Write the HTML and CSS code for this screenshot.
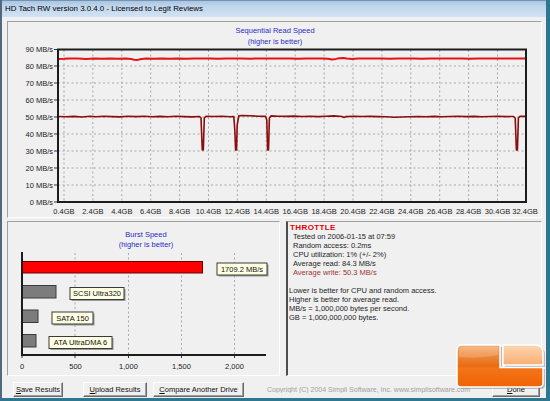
FILE: index.html
```html
<!DOCTYPE html>
<html lang="en">
<head>
  <meta charset="UTF-8">
  <title>HD Tach RW version 3.0.4.0</title>
  <link rel="stylesheet" href="styles.css">
</head>
<body>
  <div class="window">
    <div class="titlebar">HD Tach RW version 3.0.4.0 - Licensed to Legit Reviews</div>
    <div class="client">
      <div class="panel panel-top">
        <svg class="chart" width="533" height="195" viewBox="8 22 533 195">
          <text class="chart-title" x="275" y="33">Sequential Read Speed</text>
          <text class="chart-title" x="275" y="44">(higher is better)</text>

          <g class="grid">
            <line x1="58" y1="66" x2="526" y2="66"/>
            <line x1="58" y1="83" x2="526" y2="83"/>
            <line x1="58" y1="100" x2="526" y2="100"/>
            <line x1="58" y1="117" x2="526" y2="117"/>
            <line x1="58" y1="134" x2="526" y2="134"/>
            <line x1="58" y1="151" x2="526" y2="151"/>
            <line x1="58" y1="168" x2="526" y2="168"/>
            <line x1="58" y1="185" x2="526" y2="185"/>
            <line x1="64" y1="50" x2="64" y2="202"/>
            <line x1="92.9" y1="50" x2="92.9" y2="202"/>
            <line x1="121.8" y1="50" x2="121.8" y2="202"/>
            <line x1="150.7" y1="50" x2="150.7" y2="202"/>
            <line x1="179.6" y1="50" x2="179.6" y2="202"/>
            <line x1="208.5" y1="50" x2="208.5" y2="202"/>
            <line x1="237.4" y1="50" x2="237.4" y2="202"/>
            <line x1="266.3" y1="50" x2="266.3" y2="202"/>
            <line x1="295.2" y1="50" x2="295.2" y2="202"/>
            <line x1="324.1" y1="50" x2="324.1" y2="202"/>
            <line x1="353" y1="50" x2="353" y2="202"/>
            <line x1="381.9" y1="50" x2="381.9" y2="202"/>
            <line x1="410.8" y1="50" x2="410.8" y2="202"/>
            <line x1="439.7" y1="50" x2="439.7" y2="202"/>
            <line x1="468.6" y1="50" x2="468.6" y2="202"/>
            <line x1="497.5" y1="50" x2="497.5" y2="202"/>
          </g>

          <g class="ticks">
            <line x1="54" y1="49.5" x2="58" y2="49.5"/>
            <line x1="54" y1="66" x2="58" y2="66"/>
            <line x1="54" y1="83" x2="58" y2="83"/>
            <line x1="54" y1="100" x2="58" y2="100"/>
            <line x1="54" y1="117" x2="58" y2="117"/>
            <line x1="54" y1="134" x2="58" y2="134"/>
            <line x1="54" y1="151" x2="58" y2="151"/>
            <line x1="54" y1="168" x2="58" y2="168"/>
            <line x1="54" y1="185" x2="58" y2="185"/>
            <line x1="54" y1="202" x2="58" y2="202"/>
          </g>

          <g class="axis-y">
            <text x="53" y="52.2">90 MB/s</text>
            <text x="53" y="68.7">80 MB/s</text>
            <text x="53" y="85.7">70 MB/s</text>
            <text x="53" y="102.7">60 MB/s</text>
            <text x="53" y="119.7">50 MB/s</text>
            <text x="53" y="136.7">40 MB/s</text>
            <text x="53" y="153.7">30 MB/s</text>
            <text x="53" y="170.7">20 MB/s</text>
            <text x="53" y="187.7">10 MB/s</text>
            <text x="53" y="204.7">0 MB/s</text>
          </g>

          <g class="axis-x">
            <text x="64" y="214">0.4GB</text>
            <text x="92.9" y="214">2.4GB</text>
            <text x="121.8" y="214">4.4GB</text>
            <text x="150.7" y="214">6.4GB</text>
            <text x="179.6" y="214">8.4GB</text>
            <text x="208.5" y="214">10.4GB</text>
            <text x="237.4" y="214">12.4GB</text>
            <text x="266.3" y="214">14.4GB</text>
            <text x="295.2" y="214">16.4GB</text>
            <text x="324.1" y="214">18.4GB</text>
            <text x="353" y="214">20.4GB</text>
            <text x="381.9" y="214">22.4GB</text>
            <text x="410.8" y="214">24.4GB</text>
            <text x="439.7" y="214">26.4GB</text>
            <text x="468.6" y="214">28.4GB</text>
            <text x="497.5" y="214">30.4GB</text>
            <text x="525" y="214">32.4GB</text>
          </g>

          <polyline class="line-read" points="58,59 64,58.8 70,58.4 78,58.6 86,58.9 94,58.4 102,58.7 110,58.4 118,58.8 126,58.5 131,58.9 134,59.8 137,60.1 140,59.2 146,58.5 154,58.7 162,58.4 170,58.7 178,58.5 186,58.7 194,58.4 202,58.6 210,58.5 218,58.7 226,58.4 234,58.6 242,58.5 250,58.7 258,58.5 266,58.6 274,58.4 282,58.6 290,58.5 298,58.7 306,58.5 314,58.6 322,58.4 328,58.7 332,59.4 336,58.9 339,58.2 343,57.9 347,58.6 352,58.9 358,58.6 366,58.4 374,58.6 382,58.5 390,58.7 398,58.4 406,58.6 414,58.5 422,58.7 430,58.5 438,58.6 446,58.4 454,58.6 462,58.5 470,58.7 478,58.5 486,58.6 494,58.4 502,58.6 510,58.5 518,58.6 526,58.5"/>
          <polyline class="line-write" points="58,116.5 66,116.8 74,116.4 82,117 90,116.3 96,116.7 104,116.2 112,116.6 120,116.9 128,116.3 136,116.6 144,116.2 152,116.7 160,116.4 168,116.8 176,116.3 184,116.6 192,116.9 199.5,116.5 201,118 202.3,150 203.3,150 204.3,118 206,116.2 214,116.5 222,116.3 230,116.7 233.8,116.6 234.8,130 235.6,150 236.5,150 237.2,125 238.8,115.8 242,115.6 250,115.8 258,116.2 265.5,116.4 266.8,120 267.6,150 268.5,150 269.4,118 271,115.9 278,116.2 286,116.4 294,116.1 302,116.5 310,116.3 318,116.6 326,116.2 334,115.9 342,116.5 344,117.4 346,116.6 354,116.3 362,116.5 370,116.4 378,116.6 386,116.8 394,117.2 402,117 410,116.7 418,116.5 426,116.8 434,116.4 442,116.7 450,116.5 458,116.2 466,116.6 474,116.4 482,116.8 490,116.5 498,116.3 506,116.6 513.5,116.5 515.2,118 516.4,150 517.4,150 518.4,118 520,116.3 526,116.4"/>

          <rect class="plot-frame" x="58" y="49.5" width="468" height="152.5"/>
        </svg>
      </div>

      <div class="row">
        <div class="panel panel-burst">
          <svg class="chart" width="271" height="153" viewBox="8 222 271 153">
            <text class="chart-title" x="146" y="237">Burst Speed</text>
            <text class="chart-title" x="146" y="247">(higher is better)</text>

            <g class="grid">
              <line x1="75" y1="253" x2="75" y2="355"/>
              <line x1="128.5" y1="253" x2="128.5" y2="355"/>
              <line x1="181.5" y1="253" x2="181.5" y2="355"/>
              <line x1="234.5" y1="253" x2="234.5" y2="355"/>
            </g>

            <rect class="bar-red" x="22.5" y="261.5" width="180" height="11.5"/>
            <rect class="bar-gray" x="22.5" y="285.5" width="33.5" height="12.5"/>
            <rect class="bar-gray" x="22.5" y="310" width="15.5" height="12.5"/>
            <rect class="bar-gray" x="22.5" y="334.5" width="13.5" height="12.5"/>

            <rect class="tag-shadow" x="218.5" y="264.5" width="50" height="12"/>
            <rect class="tag" x="217" y="263" width="50" height="12"/>
            <text class="tag-text" x="242" y="271.8">1709.2 MB/s</text>

            <rect class="tag-shadow" x="71.5" y="289" width="54" height="12"/>
            <rect class="tag" x="70" y="287.5" width="54" height="12"/>
            <text class="tag-text" x="97" y="296.3">SCSI Ultra320</text>

            <rect class="tag-shadow" x="53.5" y="313.5" width="41" height="12"/>
            <rect class="tag" x="52" y="312" width="41" height="12"/>
            <text class="tag-text" x="72.5" y="320.8">SATA 150</text>

            <rect class="tag-shadow" x="50.5" y="338" width="63" height="12"/>
            <rect class="tag" x="49" y="336.5" width="63" height="12"/>
            <text class="tag-text" x="80.5" y="345.3">ATA UltraDMA 6</text>

            <g class="ticks">
              <line x1="22" y1="355" x2="22" y2="358"/>
              <line x1="75" y1="355" x2="75" y2="358"/>
              <line x1="128.5" y1="355" x2="128.5" y2="358"/>
              <line x1="181.5" y1="355" x2="181.5" y2="358"/>
              <line x1="234.5" y1="355" x2="234.5" y2="358"/>
            </g>
            <line class="axis-line" x1="22" y1="252" x2="22" y2="355.5"/>
            <line class="axis-line" x1="21" y1="355" x2="266" y2="355"/>

            <g class="axis-x">
              <text x="22" y="368.5">0</text>
              <text x="75.5" y="368.5">500</text>
              <text x="128.5" y="368.5">1,000</text>
              <text x="181.5" y="368.5">1,500</text>
              <text x="234.5" y="368.5">2,000</text>
            </g>
          </svg>
        </div>

        <div class="panel panel-info">
          <div class="throttle">THROTTLE</div>
          <div class="indent">Tested on 2006-01-15 at 07:59</div>
          <div class="indent">Random access: 0.2ms</div>
          <div class="indent">CPU utilization: 1% (+/- 2%)</div>
          <div class="indent">Average read: 84.3 MB/s</div>
          <div class="indent write">Average write: 50.3 MB/s</div>
          <div class="blank"></div>
          <div>Lower is better for CPU and random access.</div>
          <div>Higher is better for average read.</div>
          <div>MB/s = 1,000,000 bytes per second.</div>
          <div>GB = 1,000,000,000 bytes.</div>
        </div>
      </div>

      <div class="footer">
        <button class="btn btn-save"><u>S</u>ave Results</button>
        <button class="btn btn-upload"><u>U</u>pload Results</button>
        <button class="btn btn-compare"><u>C</u>ompare Another Drive</button>
        <span class="copyright">Copyright (C) 2004 Simpli Software, Inc. www.simplisoftware.com</span>
        <button class="btn btn-done"><u>D</u>one</button>
      </div>
    </div>

    <!-- Legit Reviews watermark -->
    <svg class="logo" width="94" height="52" viewBox="454 342 94 52">
      <defs>
        <linearGradient id="orange" x1="0" y1="0" x2="0" y2="1">
          <stop offset="0" stop-color="#f6b07a"/>
          <stop offset="0.18" stop-color="#ef9048"/>
          <stop offset="0.5" stop-color="#e86c14"/>
          <stop offset="0.56" stop-color="#f47418"/>
          <stop offset="1" stop-color="#ef6204"/>
        </linearGradient>
        <linearGradient id="peach" x1="0" y1="0" x2="0" y2="1">
          <stop offset="0" stop-color="#fdd6b2"/>
          <stop offset="1" stop-color="#f9ae72"/>
        </linearGradient>
      </defs>
      <path class="logo-shadow" d="M459,352 q0,-5 5,-5 h38 v22 h43 v16 q0,4 -4,4 h-78 q-4,0 -4,-4 z"/>
      <path class="logo-shadow" d="M505,347 h32 q8,0 8,8 v12 h-40 z"/>
      <path class="logo-l" d="M457,350 q0,-5 5,-5 h38 v22.5 h43 v15.5 q0,4 -4,4 h-78 q-4,0 -4,-4 z"/>
      <path class="logo-gloss" d="M459,352 q0,-5 4,-5 h35 v8 q-18,4 -39,2 z"/>
      <path class="logo-sq" d="M503,345 h32 q8,0 8,8 v12 h-40 z"/>
    </svg>
  </div>
</body>
</html>
```

FILE: styles.css
```css
* {
  box-sizing: border-box;
}

body {
  margin: 0;
  width: 550px;
  height: 401px;
  overflow: hidden;
  font-family: "Liberation Sans", Arial, sans-serif;
}

.window {
  position: relative;
  width: 550px;
  height: 401px;
  display: flex;
  flex-direction: column;
  background: #f0f0f0;
  border-left: 2px solid #50697c;
  border-right: 4px solid #2f7691;
  border-bottom: 3px solid #2f7691;
}

.titlebar {
  height: 17px;
  line-height: 16px;
  padding-left: 3px;
  font-size: 7.9px;
  color: #000;
  white-space: nowrap;
  border-top: 1px solid #7393b2;
  background: linear-gradient(#aac5e2, #c0d6ec 35%, #d2e2f2);
}

.client {
  flex: 1;
  display: flex;
  flex-direction: column;
  padding: 4px 4px 0 5px;
  background: #f0f0f0;
}

.panel {
  border: 1px solid;
  border-color: #a0a0a0 #ffffff #ffffff #a0a0a0;
}

.panel-top {
  height: 197px;
}

.chart {
  display: block;
}

.chart text {
  font-family: "Liberation Sans", Arial, sans-serif;
  font-size: 7.5px;
  fill: #222;
}

.chart .chart-title {
  text-anchor: middle;
  fill: #2b2bc8;
}

.grid line {
  stroke: #a8a8a8;
  stroke-width: 1;
  stroke-dasharray: 2 2.5;
}

.ticks line {
  stroke: #333;
  stroke-width: 1;
}

.axis-y text {
  text-anchor: end;
}

.axis-x text {
  text-anchor: middle;
}

.plot-frame {
  fill: none;
  stroke: #1c1c1c;
  stroke-width: 2;
}

.axis-line {
  stroke: #1c1c1c;
  stroke-width: 2;
}

.line-read {
  fill: none;
  stroke: #e31414;
  stroke-width: 2;
  stroke-linejoin: round;
}

.line-write {
  fill: none;
  stroke: #8a0c0c;
  stroke-width: 1.6;
  stroke-linejoin: round;
}

.bar-red {
  fill: #ff0000;
  stroke: #6a0000;
  stroke-width: 1;
}

.bar-gray {
  fill: #7c7c7c;
  stroke: #3a3a3a;
  stroke-width: 1;
}

.tag {
  fill: #ffffe4;
  stroke: #3a3a3a;
  stroke-width: 1;
}

.tag-shadow {
  fill: #9a9a9a;
}

.chart .tag-text {
  text-anchor: middle;
  fill: #111;
}

.row {
  display: flex;
  gap: 6px;
  height: 155px;
  margin-top: 3px;
}

.panel-burst {
  width: 273px;
}

.panel-info {
  width: 256px;
  border-left: 2px solid #4e4e4e;
  padding: 0.5px 0 0 1px;
  font-size: 7.5px;
  line-height: 9px;
  color: #1e1e1e;
  white-space: nowrap;
}

.throttle {
  margin-left: 1px;
  font-size: 8px;
  font-weight: bold;
  letter-spacing: 0.4px;
  color: #e60000;
}

.indent {
  padding-left: 4px;
}

.write {
  color: #a23434;
}

.blank {
  height: 9px;
}

.footer {
  display: flex;
  align-items: center;
  height: 15px;
  margin-top: 6px;
}

.btn {
  height: 15px;
  padding: 0;
  font-family: "Liberation Sans", Arial, sans-serif;
  font-size: 7.5px;
  color: #111;
  background: #f0f0f0;
  border: 1px solid;
  border-color: #ffffff #6a6a6a #6a6a6a #ffffff;
  box-shadow: inset -1px -1px 0 #a0a0a0;
}

.btn-save {
  width: 50px;
  margin-left: 6px;
}

.btn-upload {
  width: 64px;
  margin-left: 20px;
}

.btn-compare {
  width: 91px;
  margin-left: 6px;
}

.copyright {
  margin-left: 23px;
  font-size: 7px;
  color: #a0a0a0;
  white-space: nowrap;
  overflow: hidden;
  flex: 1;
}

.btn-done {
  width: 48px;
  margin: 0 2px 0 4px;
}

.logo {
  position: absolute;
  left: 452px;
  top: 342px;
}

.logo-shadow {
  fill: #8a8a8a;
  opacity: 0.55;
}

.logo-l {
  fill: url(#orange);
  stroke: #ffffff;
  stroke-width: 1.5;
}

.logo-gloss {
  fill: #ffffff;
  opacity: 0.18;
}

.logo-sq {
  fill: url(#peach);
  stroke: #ffffff;
  stroke-width: 1.5;
}
```
